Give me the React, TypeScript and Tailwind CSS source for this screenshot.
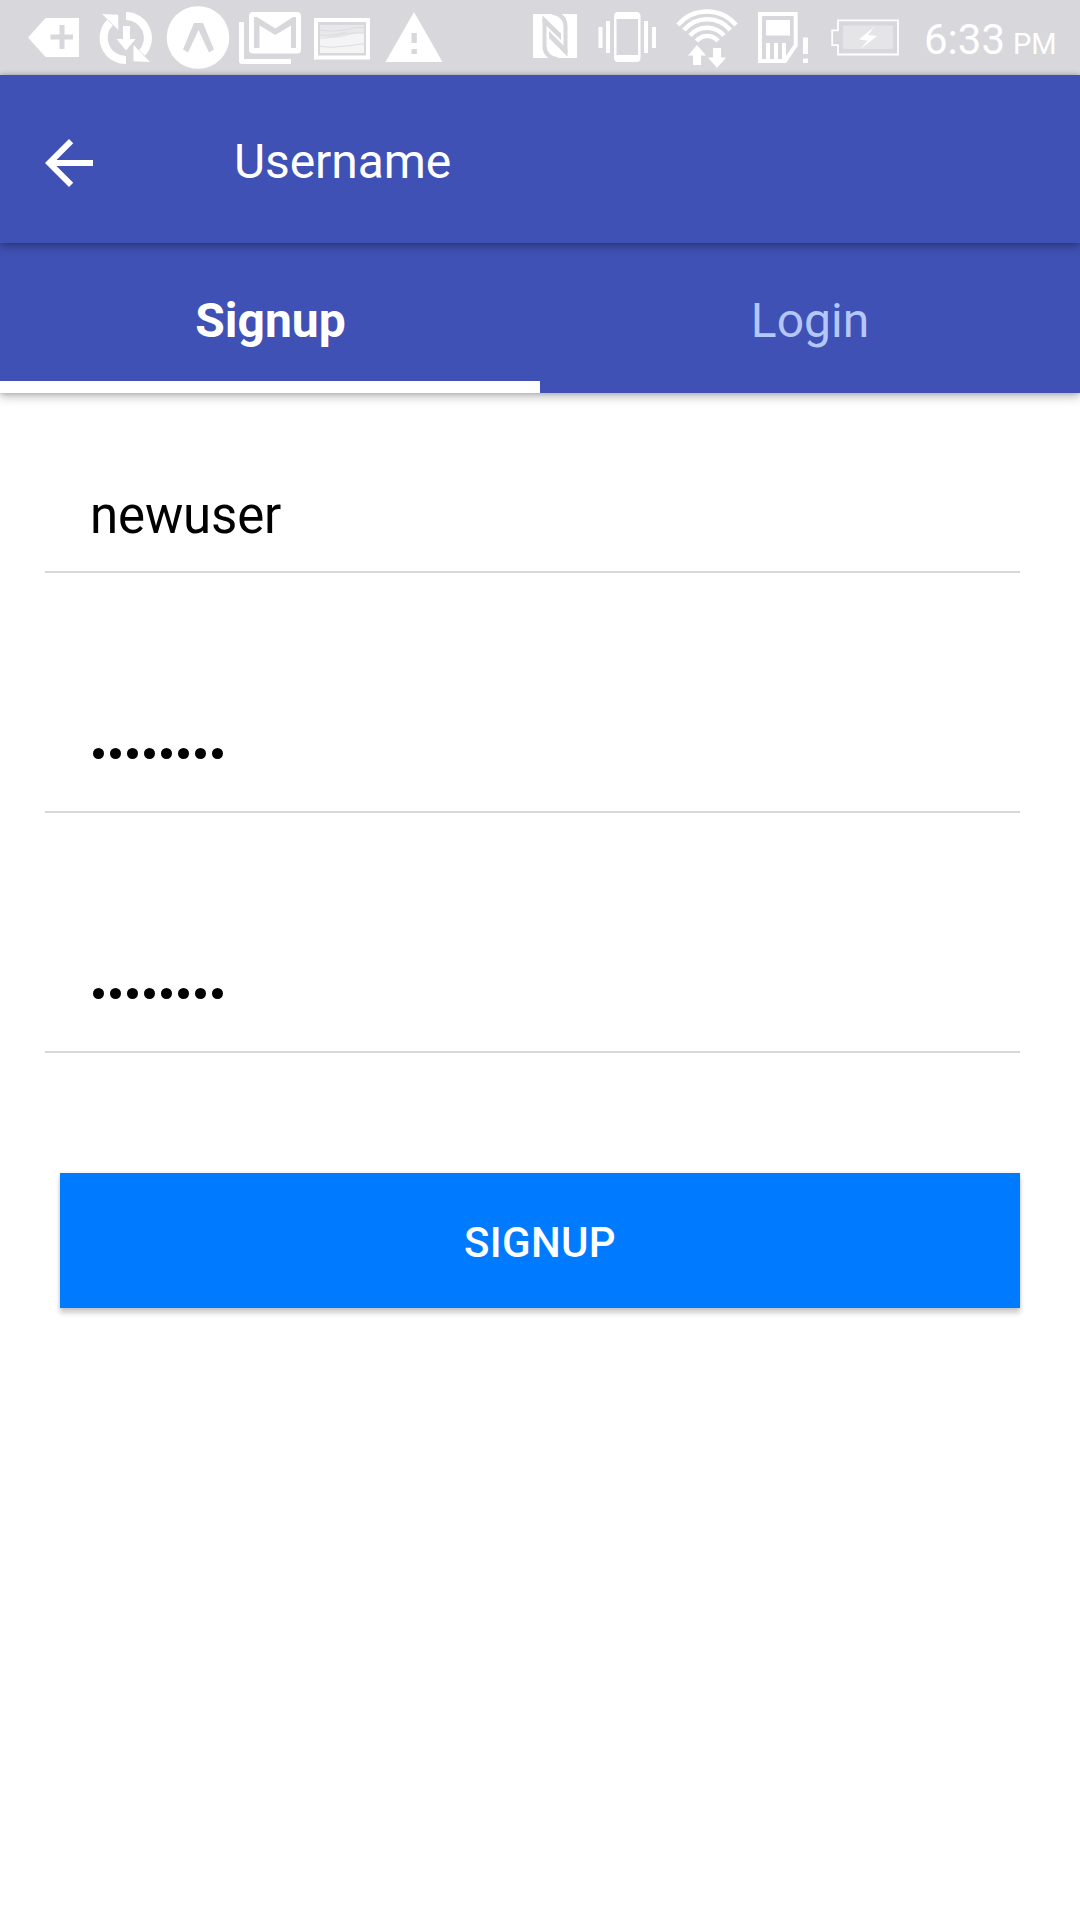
import type { ReactNode } from "react";

const BAR = "#d8d7dc";

function StatusIcon({ x, w, children }: { x: number; w: number; children: ReactNode }) {
  return (
    <svg className="shrink-0" width={w} height={75} viewBox={`${x} 0 ${w} 75`} fill="#fff">
      {children}
    </svg>
  );
}

function StatusBar() {
  return (
    <div className="flex h-[75px] items-start bg-[#d8d7dc] text-white">
      <StatusIcon x={0} w={90}>
        <path d="M28 37.5 45.5 18H79v39H45.5Z" />
        <path fill={BAR} d="M59.5 25h5v9.500H73v5H64.500V49h-5V39.500H50.500v-5h9Z" />
      </StatusIcon>
      <StatusIcon x={90} w={70}>
        <path d="M126 60A22 22 0 0 1 110 22.500M126 16A22 22 0 0 1 142 53" fill="none" stroke="#fff" strokeWidth="8" />
        <path d="M102 14l16.300 .8V30ZM150 62l-16.500-.8V45ZM123 26h7v13h5.500L126 50.500 116.500 39h6.500Z" />
      </StatusIcon>
      <StatusIcon x={160} w={75}>
        <circle cx="198" cy="37.5" r="31.3" />
        <path fill={BAR} d="M194 23h9l11 26.500-5 3L198.500 30 188 52.500l-5-3Z" />
      </StatusIcon>
      <StatusIcon x={235} w={73}>
        <path d="M239 22h5v37h47v5H242a3 3 0 0 1-3-3Z" />
        <rect x="249" y="12" width="52" height="41.500" rx="4" />
        <path fill={BAR} d="M254 17h3l18.300 11.500L293 17h3v31h-5V25.500L275.300 35 259.500 25.500V48H254Z" />
      </StatusIcon>
      <StatusIcon x={308} w={70}>
        <path fillRule="evenodd" d="M314 18h56v41.500h-56ZM318 22v33.500h48V22Z" />
        <path fill="#f4f4f5" d="M320 25h44v28h-44Z" />
        <path fill="#e8e8ea" d="M320 25h44v8c-12-1-18 5-30 5-6 0-8-1-14-1Z" />
        <path
          fill="none"
          stroke="#dcdce0"
          strokeWidth="1"
          d="M320 30c12 2 20 0 30-1 5-2 9-2 14-1M320 35c12 1 18-1 26-3M320 38c13 1 19-6 44-5M320 46c10 2 14 1 25 0 8 0 10-2 19-2"
        />
      </StatusIcon>
      <StatusIcon x={378} w={147}>
        <path d="M414 12l28.500 50h-57Z" />
        <path fill={BAR} d="M411.500 33h5.300v10h-5.300ZM411.500 49h5.300v5h-5.300Z" />
      </StatusIcon>
      <StatusIcon x={525} w={65}>
        <path d="M533 14h44v44h-44Z" />
        <path
          fill="none"
          stroke={BAR}
          strokeWidth="4"
          d="M558 59.500Q544.500 57 544.500 46V19M552 12.500Q565.500 15 565.500 26V53"
        />
        <path fill={BAR} d="M542.500 15.500 561 33.500v6.500L542.500 22ZM549 31 567.500 49.500V56.500L549 38Z" />
      </StatusIcon>
      <StatusIcon x={590} w={75}>
        <path
          fillRule="evenodd"
          d="M618 12h18.500a4 4 0 0 1 4 4v42a4 4 0 0 1-4 4H618a4 4 0 0 1-4-4V16a4 4 0 0 1 4-4ZM616.500 19v36h21.500V19Z"
        />
        <path d="M598.500 27h4v21h-4ZM606 21h4v32h-4ZM644 21h4v32h-4ZM652 27h4v21h-4Z" />
      </StatusIcon>
      <StatusIcon x={665} w={80}>
        <path
          fill="none"
          stroke="#fff"
          strokeWidth="4.500"
          d="M678 25A37.800 37.800 0 0 1 736 25M684 30A30.300 30.300 0 0 1 730.300 30M690 35.500A22.500 22.500 0 0 1 724 35.500M696.500 41A14 14 0 0 1 718 41"
        />
        <path d="M697 45l9 10.500h-5V65h-8v-9.500h-5ZM713 48h8v9.500h5L717 68l-9-10.500h5Z" />
      </StatusIcon>
      <StatusIcon x={745} w={75}>
        <path fill="none" stroke="#fff" strokeWidth="4" d="M760 14h35.700v31.500L785 61h-25Z" />
        <path d="M766 20h24v15.500h-24ZM766 43h4v18h-4ZM774 43h4v18h-4ZM782 43h4v16l-4 2ZM803 37.500h5V54h-5ZM803 58.500h5v4.500h-5Z" />
      </StatusIcon>
      <StatusIcon x={820} w={104}>
        <path fill="none" stroke="#fff" strokeWidth="1.800" d="M838 20.300h60v34.200h-60v-9.300h-5.800V30.300h5.800Z" />
        <path fill="#e5e5e8" d="M843 25.500h50V49h-50Z" />
        <path d="M874.500 26.500 859 39.500l8.500 1-7 8.500L877 36l-9-1Z" />
      </StatusIcon>
      <div className="flex items-baseline whitespace-nowrap leading-[75px]">
        <span className="w-[89px] text-[42px] leading-[80px]">6:33</span>
        <span className="text-[29px]">PM</span>
      </div>
    </div>
  );
}

function Field({ value, secret = false }: { value: string; secret?: boolean }) {
  return (
    <div className="mb-[90px] flex h-[150px] w-[975px] items-center border-b-2 border-[#d8d7dc] pl-[45px] pt-[35px]">
      {secret ? (
        <div className="mb-[2px] flex gap-[6px] pl-[3px]" role="img" aria-label="Password">
          {value.split("").map((_, i) => (
            <span key={i} className="h-[11.500px] w-[11px] rounded-full bg-black" />
          ))}
        </div>
      ) : (
        <span className="pt-[2px] text-[51px] leading-[60px] tracking-[-0.150px]">{value}</span>
      )}
    </div>
  );
}

export default function App() {
  return (
    <div className="flex h-[1920px] w-[1080px] flex-col overflow-hidden bg-white font-['Roboto',sans-serif] text-black">
      <StatusBar />
      <header className="relative z-20 flex h-[168px] items-center bg-[#3f51b5] pl-[45px] pt-[8px] text-white shadow-[0_5px_9px_rgba(0,0,0,0.2),0_0_5px_rgba(0,0,0,0.28)]">
        <svg width="48" height="48" viewBox="4 4 16 16" fill="currentColor">
          <path d="M20 11H7.830l5.590-5.590L12 4l-8 8 8 8 1.410-1.410L7.830 13H20v-2z" />
        </svg>
        <h1 className="mb-[2px] ml-[141px] text-[48px] tracking-[-0.100px]">Username</h1>
      </header>
      <nav className="relative z-10 flex h-[150px] bg-[#3f51b5] shadow-[0_5px_9px_rgba(0,0,0,0.2),0_0_5px_rgba(0,0,0,0.25)]">
        <button className="flex w-1/2 items-center justify-center border-b-12 border-white pl-px pt-[17px] text-[48px] font-bold text-white">
          Signup
        </button>
        <button className="flex w-1/2 items-center justify-center pt-[5px] text-[48px] text-[#b3c7f9]">Login</button>
      </nav>
      <main className="flex flex-col pl-[45px] pt-[30px]">
        <Field value="newuser" />
        <Field value="password" secret />
        <Field value="password" secret />
        <button className="ml-[15px] mt-[30px] h-[135px] w-[960px] bg-[#007aff] pt-[4px] text-[42px] font-medium tracking-[0.300px] text-white shadow-[0_5px_5px_rgba(0,0,0,0.2),0_0_3px_rgba(0,0,0,0.12)]">
          SIGNUP
        </button>
      </main>
    </div>
  );
}
